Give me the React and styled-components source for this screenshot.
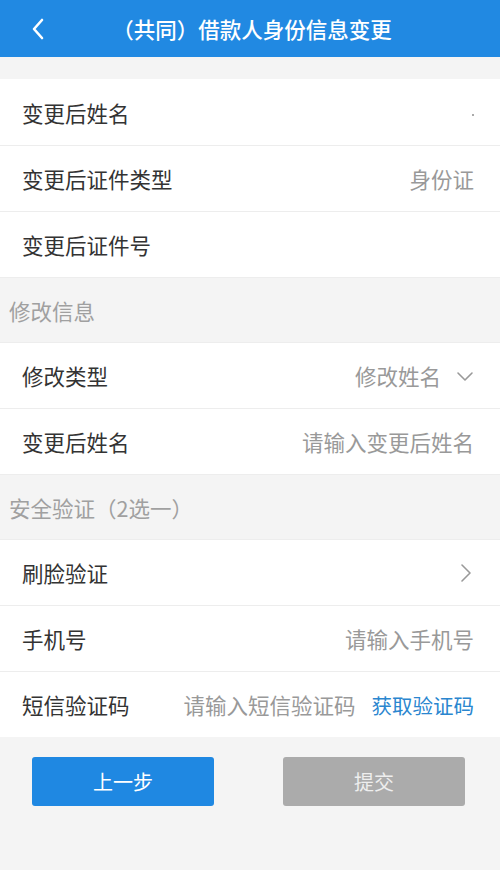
import React from "react";
import styled, { createGlobalStyle } from "styled-components";

const Global = createGlobalStyle`
  html, body {
    margin: 0;
    padding: 0;
    background: #f4f4f4;
  }
  body {
    font-family: "Noto Sans CJK SC", "Noto Sans", sans-serif;
  }
`;

const Page = styled.div`
  width: 500px;
  min-height: 870px;
  background: #f4f4f4;
`;

const Header = styled.div`
  height: 57px;
  background: #2189e2;
  display: flex;
  align-items: center;
  justify-content: center;
  position: relative;
  color: #fff;
`;

const Title = styled.h1`
  margin: 0;
  font-size: 21.5px;
  font-weight: 500;
  padding-left: 4px;
`;

const Back = styled.button`
  position: absolute;
  left: 26px;
  top: 16px;
  width: 24px;
  height: 26px;
  padding: 0;
  border: 0;
  background: none;
  display: flex;
  align-items: center;
  justify-content: center;
`;

const Group = styled.div`
  background: #fff;
  margin-top: ${(p) => p.$gap || 0}px;
`;

const Row = styled.div`
  height: 66px;
  display: flex;
  align-items: center;
  padding: 0 26px 0 22px;
  border-top: ${(p) => (p.$first ? "none" : "1px solid #ededed")};
  box-sizing: border-box;
`;

const Label = styled.span`
  font-size: 21.5px;
  color: #333;
  white-space: nowrap;
`;

const Value = styled.span`
  margin-left: auto;
  font-size: 21.5px;
  color: #999;
  display: flex;
  align-items: center;
  gap: 15px;
  white-space: nowrap;
`;

const Link = styled.span`
  font-size: 20.5px;
  color: #2a86cf;
  margin-left: 16px;
  white-space: nowrap;
`;

const Section = styled.div`
  height: 65px;
  display: flex;
  align-items: center;
  padding-left: 9px;
  font-size: 21.5px;
  color: #a0a0a0;
  border-top: 1px solid #ededed;
  box-sizing: border-box;
`;

const Actions = styled.div`
  display: flex;
  justify-content: space-between;
  padding: 20px 35px 0 32px;
`;

const Button = styled.button`
  width: 182px;
  height: 49px;
  border: 0;
  border-radius: 3px;
  background: ${(p) => (p.$primary ? "#1f88e2" : "#ababab")};
  color: ${(p) => (p.$primary ? "#fff" : "#eee")};
  font-family: inherit;
  font-size: 20px;
`;

const Dot = styled.span`
  width: 2px;
  height: 2px;
  background: #aaa;
  margin-top: 6px;
`;

const Chevron = ({ dir }) => (
  <svg width="18" height="18" viewBox="0 0 18 18" fill="none" stroke="#999" strokeWidth="1.6" strokeLinecap="round" strokeLinejoin="round">
    {dir === "down" ? <path d="M2 6l7 7 7-7" /> : <path d="M6 1l8 8-8 8" />}
  </svg>
);

export default function App() {
  return (
    <Page>
      <Global />
      <Header>
        <Back aria-label="back">
          <svg width="16" height="24" viewBox="0 0 16 24" fill="none" stroke="#fff" strokeWidth="2.6" strokeLinecap="round" strokeLinejoin="round">
            <path d="M12 3L4 12l8 9" />
          </svg>
        </Back>
        <Title>（共同）借款人身份信息变更</Title>
      </Header>

      <Group $gap={22}>
        <Row $first>
          <Label>变更后姓名</Label>
          <Value><Dot /></Value>
        </Row>
        <Row>
          <Label>变更后证件类型</Label>
          <Value>身份证</Value>
        </Row>
        <Row>
          <Label>变更后证件号</Label>
        </Row>
      </Group>

      <Section>修改信息</Section>
      <Group>
        <Row>
          <Label>修改类型</Label>
          <Value>
            修改姓名
            <Chevron dir="down" />
          </Value>
        </Row>
        <Row>
          <Label>变更后姓名</Label>
          <Value>请输入变更后姓名</Value>
        </Row>
      </Group>

      <Section>安全验证（2选一）</Section>
      <Group>
        <Row>
          <Label>刷脸验证</Label>
          <Value>
            <Chevron dir="right" />
          </Value>
        </Row>
        <Row>
          <Label>手机号</Label>
          <Value>请输入手机号</Value>
        </Row>
        <Row>
          <Label>短信验证码</Label>
          <Value>请输入短信验证码</Value>
          <Link>获取验证码</Link>
        </Row>
      </Group>

      <Actions>
        <Button $primary>上一步</Button>
        <Button>提交</Button>
      </Actions>
    </Page>
  );
}
